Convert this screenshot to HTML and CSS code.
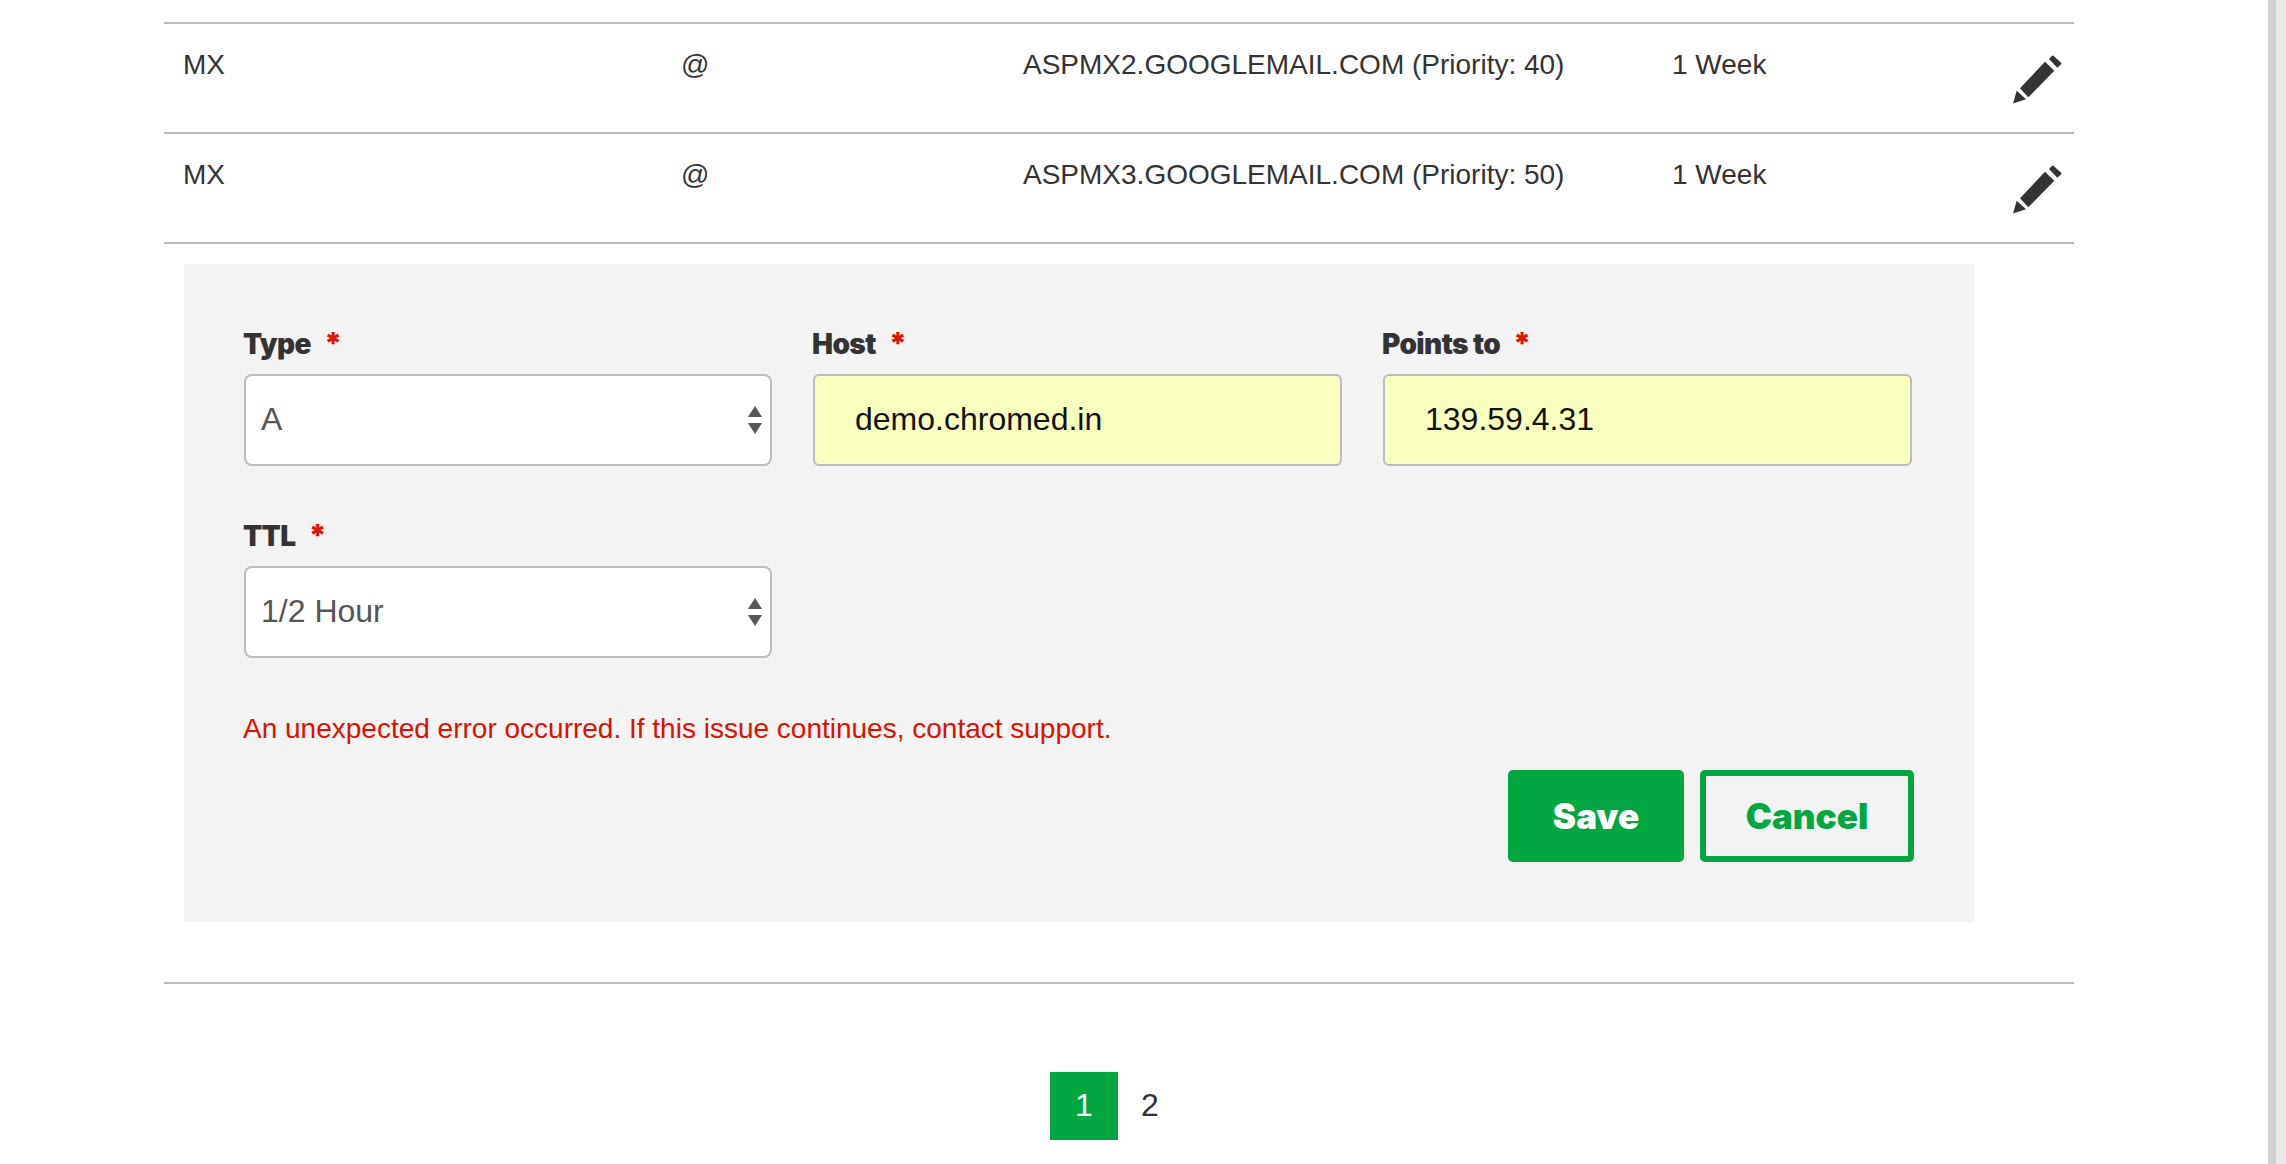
FILE: index.html
```html
<!DOCTYPE html>
<html lang="en">
<head>
<meta charset="utf-8">
<title>DNS records</title>
<link rel="stylesheet" href="styles.css">
</head>
<body>
<div class="page">
  <main class="content">
    <div class="record first">
      <span>MX</span><span>@</span><span>ASPMX2.GOOGLEMAIL.COM (Priority: 40)</span><span>1 Week</span>
      <svg class="pencil" viewBox="0 0 49 49"><path d="M36 4 39 .8a1 1 0 0 1 1.400 0l7.700 7a1 1 0 0 1 0 1.400L44.300 12.700zM32 6.700l9.300 9L15.300 42.300 7 33.300zM3.700 35.700 13 44.300 0 48.500z"/></svg>
    </div>
    <div class="record">
      <span>MX</span><span>@</span><span>ASPMX3.GOOGLEMAIL.COM (Priority: 50)</span><span>1 Week</span>
      <svg class="pencil" viewBox="0 0 49 49"><path d="M36 4 39 .8a1 1 0 0 1 1.400 0l7.700 7a1 1 0 0 1 0 1.400L44.300 12.700zM32 6.700l9.300 9L15.300 42.300 7 33.300zM3.700 35.700 13 44.300 0 48.500z"/></svg>
    </div>
    <form class="panel">
      <div class="fields">
        <div class="field">
          <label class="label">Type <b class="req">*</b></label>
          <div class="control select">A<span class="arrows"><i class="up"></i><i class="down"></i></span></div>
        </div>
        <div class="field">
          <label class="label">Host <b class="req">*</b></label>
          <div class="control filled">demo.chromed.in</div>
        </div>
        <div class="field">
          <label class="label">Points to <b class="req">*</b></label>
          <div class="control filled">139.59.4.31</div>
        </div>
        <div class="field">
          <label class="label">TTL <b class="req">*</b></label>
          <div class="control select">1/2 Hour<span class="arrows"><i class="up"></i><i class="down"></i></span></div>
        </div>
      </div>
      <p class="error">An unexpected error occurred. If this issue continues, contact support.</p>
      <div class="actions">
        <button type="button" class="btn save">Save</button>
        <button type="button" class="btn cancel">Cancel</button>
      </div>
    </form>
    <div class="divider"></div>
    <nav class="pager"><a class="page-num current">1</a><a class="page-num next">2</a></nav>
  </main>
  <aside class="scrollbar"><div class="track-dark"></div><div class="track-light"></div></aside>
</div>
</body>
</html>
```

FILE: styles.css
```css
* { box-sizing: border-box; }
html, body { margin: 0; height: 100%; }
body {
  font-family: "Liberation Sans", Arial, sans-serif;
  font-size: 28px;
  color: #333;
  background: #fff;
  overflow: hidden;
}
.page { display: flex; height: 1164px; }
.content { width: 1910px; margin-left: 164px; padding-top: 22px; }
.scrollbar { display: flex; margin-left: 194px; width: 18px; }
.track-dark { width: 8px; background: #d0d0d0; }
.track-light { width: 10px; background: #e8e8e8; }

.record {
  display: grid;
  grid-template-columns: 498px 342px 649px 1fr;
  height: 110px;
  padding: 24px 12px 0 19px;
  border-bottom: 2px solid #bbb;
  position: relative;
  line-height: 34px;
}
.record.first { height: 112px; border-top: 2px solid #bbb; }
.pencil { position: absolute; right: 12px; top: 31px; width: 49px; height: 49px; fill: #333; }

.panel {
  width: 1790px;
  height: 658px;
  margin: 20px 0 60px 20px;
  padding: 60px 60px 0;
  background: #f3f3f3;
}
.fields {
  display: grid;
  grid-template-columns: 528px 529px 529px;
  column-gap: 41px;
  row-gap: 50px;
}
.label {
  display: block;
  height: 34px;
  margin: 0 0 16px -1px;
  padding-top: 2px;
  font-family: Inter, sans-serif;
  font-weight: 900;
  font-size: 28px;
  line-height: 34px;
  letter-spacing: -0.6px;
  white-space: nowrap;
}
.req { color: #e01500; margin-left: 8px; font-weight: 900; font-size: 30px; }
.control {
  position: relative;
  height: 92px;
  padding-left: 15px;
  border: 2px solid #bbb;
  border-radius: 8px;
  background: #fff;
  color: #555;
  font-size: 32px;
  line-height: 86px;
}
.filled { background: #f9ffbd; color: #111; padding-left: 40px; border-radius: 6px; }
.arrows {
  position: absolute;
  right: 8px;
  top: 30px;
  display: flex;
  flex-direction: column;
  gap: 6px;
}
.arrows i { display: block; width: 0; height: 0; border-left: 7px solid transparent; border-right: 7px solid transparent; }
.arrows .up { border-bottom: 11px solid #555; }
.arrows .down { border-top: 11px solid #555; }

.error { margin: 54px 0 0 -1px; color: #dd1100; font-size: 28px; line-height: 34px; }
.actions { display: flex; justify-content: flex-end; gap: 16px; margin: 24px 0 0; }
.btn {
  height: 92px;
  border-radius: 5px;
  font-family: Inter, sans-serif;
  font-weight: 900;
  font-size: 35px;
  padding: 0;
}
.save { width: 176px; background: #00a63f; border: 0; color: #fff; }
.cancel { width: 214px; background: transparent; border: 6px solid #00a63f; color: #00a63f; }

.divider { height: 2px; background: #bbb; }
.pager { display: flex; margin: 88px 0 0 886px; }
.page-num { width: 68px; height: 68px; text-align: center; line-height: 66px; font-size: 32px; }
.next { width: 64px; }
.current { background: #00a63f; color: #fff; }
```
